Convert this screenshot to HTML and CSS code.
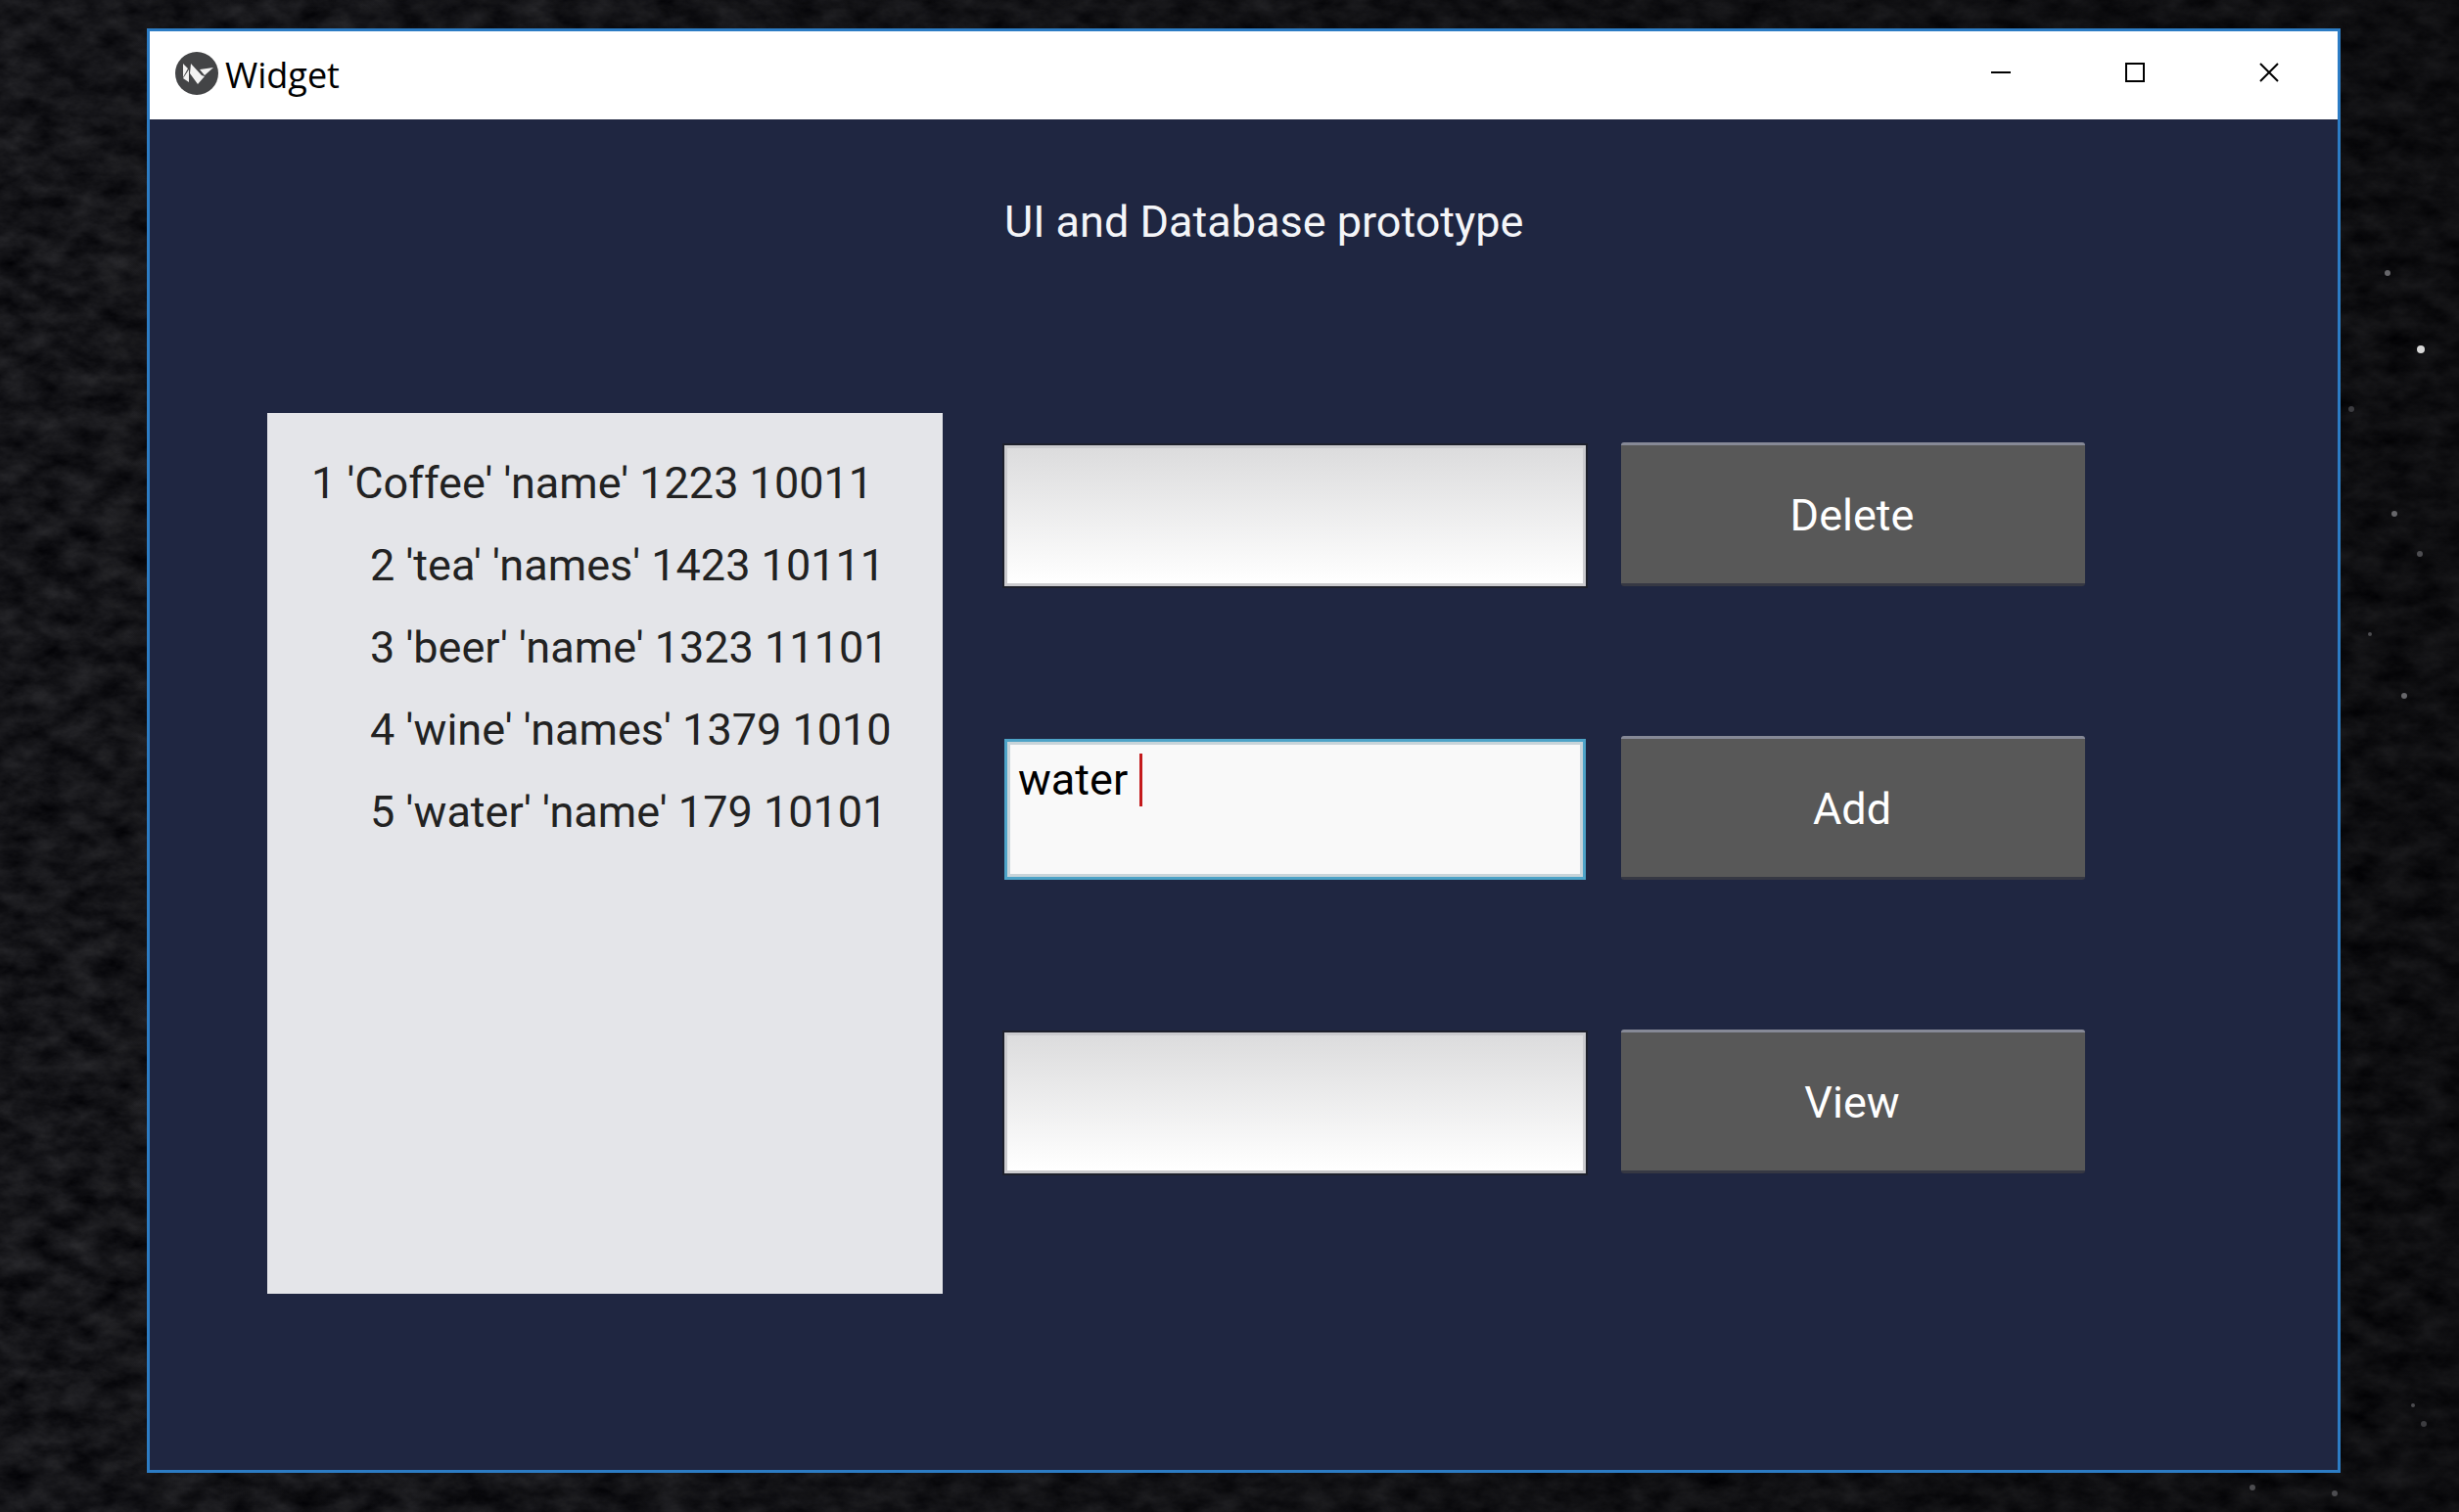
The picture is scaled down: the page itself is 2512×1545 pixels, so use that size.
FILE: index.html
```html
<!DOCTYPE html>
<html lang="en">
<head>
<meta charset="utf-8">
<title>Widget</title>
<link rel="stylesheet" href="styles.css">
</head>
<body>
<svg class="wallpaper" aria-hidden="true">
  <filter id="grain" x="0" y="0" width="100%" height="100%" color-interpolation-filters="sRGB">
    <feTurbulence type="fractalNoise" baseFrequency="0.03 0.05" numOctaves="5" seed="7"/>
    <feColorMatrix values="0.18 0 0 0 -0.008  0.18 0 0 0 -0.008  0.18 0 0 0 0.006  0 0 0 0 1"/>
  </filter>
  <rect width="100%" height="100%" filter="url(#grain)"/>
  <linearGradient id="shade">
    <stop offset="0" stop-color="#000" stop-opacity="0"/>
    <stop offset="1" stop-color="#000" stop-opacity=".35"/>
  </linearGradient>
  <rect width="100%" height="100%" fill="url(#shade)"/>
  <g fill="#66666a">
    <circle cx="2473" cy="357" r="4" fill="#d8d8d8"/>
    <circle cx="2439" cy="279" r="3"/>
    <circle cx="2446" cy="525" r="3"/>
    <circle cx="2472" cy="566" r="3" fill="#4c4c50"/>
    <circle cx="2456" cy="711" r="3"/>
    <circle cx="2421" cy="648" r="2" fill="#4c4c50"/>
    <circle cx="2402" cy="418" r="3" fill="#3c3c40"/>
    <circle cx="2301" cy="1520" r="3" fill="#4c4c50"/>
    <circle cx="2385" cy="1526" r="3" fill="#4c4c50"/>
    <circle cx="2465" cy="1436" r="2" fill="#4c4c50"/>
    <circle cx="2476" cy="1455" r="3" fill="#3c3c40"/>
  </g>
</svg>
<div class="window">
  <header class="titlebar">
    <svg class="logo" viewBox="0 0 44 44" aria-hidden="true">
      <circle cx="22" cy="22" r="22" fill="#434446"/>
      <path fill="#f2f2f2" d="M8 12l5 5-5 9zM14 18v13l-6-4zM16 12l11 12 3 1-7 8-8-11zM25 18l14-2-9 8z"/>
    </svg>
    <span class="caption">Widget</span>
    <button class="control" aria-label="Minimize"><svg viewBox="0 0 20 20"><path d="M0 10h20"/></svg></button>
    <button class="control" aria-label="Maximize"><svg viewBox="0 0 20 20"><path d="M1 1h18v18H1z"/></svg></button>
    <button class="control" aria-label="Close"><svg viewBox="0 0 20 20"><path d="M1 1l18 18M19 1L1 19"/></svg></button>
  </header>
  <main class="content">
    <h1 class="heading">UI and Database prototype</h1>
    <ul class="records">
      <li>1 'Coffee' 'name' 1223 10011</li>
      <li class="indented">2 'tea' 'names' 1423 10111</li>
      <li class="indented">3 'beer' 'name' 1323 11101</li>
      <li class="indented">4 'wine' 'names' 1379 1010</li>
      <li class="indented">5 'water' 'name' 179 10101</li>
    </ul>
    <form class="actions">
      <textarea class="field" aria-label="Record to delete"></textarea>
      <button class="action" type="button">Delete</button>
      <div class="entry">
        <textarea class="field active" aria-label="Record to add">water </textarea>
        <span class="caret"></span>
      </div>
      <button class="action" type="button">Add</button>
      <textarea class="field" aria-label="Record to view"></textarea>
      <button class="action" type="button">View</button>
    </form>
  </main>
</div>
</body>
</html>
```
FILE: styles.css
```css
* { box-sizing: border-box; }

body {
  margin: 0;
  min-height: 100vh;
  display: flex;
  padding: 29px 121px 40px 150px;
  background: #0f1014;
  font: 45px/84px Roboto, sans-serif;
}

.wallpaper {
  position: fixed;
  inset: 0;
  width: 100%;
  height: 100%;
  z-index: -1;
}

.window {
  flex: 1;
  display: flex;
  flex-direction: column;
  border: 3px solid #2c7cc4;
  background: #1f2641;
}

.titlebar {
  display: flex;
  align-items: center;
  height: 90px;
  padding: 0 2px 0 26px;
  background: #fff;
}

.logo { width: 44px; height: 44px; margin-bottom: 4px; }

.caption {
  flex: 1;
  padding-left: 7px;
  color: #000;
  font: 36px/48px "Open Sans", sans-serif;
}

.control {
  width: 137px;
  height: 90px;
  padding: 0 0 6px;
  border: 0;
  background: none;
  display: grid;
  place-items: center;
}

.control svg {
  width: 20px;
  height: 20px;
  fill: none;
  stroke: #000;
  stroke-width: 2;
}

.content {
  flex: 1;
  display: grid;
  grid-template-columns: 690fr 1104fr;
  align-content: start;
  gap: 153px 63px;
  padding: 63px 258px 180px 120px;
}

.heading {
  grid-column: 2;
  margin: 0;
  color: #f4f5f8;
  font-size: 45px;
  font-weight: 400;
  line-height: 84px;
}

.records {
  height: 900px;
  margin: 0;
  padding: 30px 45px;
  list-style: none;
  background: #e4e5e9;
  color: #222;
}

.indented { padding-left: 60px; }

.actions {
  display: grid;
  grid-template-columns: 594fr 474fr;
  grid-auto-rows: 144px;
  align-content: start;
  gap: 156px 36px;
  padding-top: 33px;
}

.field {
  display: block;
  width: 100%;
  height: 144px;
  padding: 12px 11px;
  border: 3px solid #cbcbce;
  outline: 2px solid #1d202b;
  border-radius: 0;
  background: linear-gradient(#dcdcdd, #fff) padding-box;
  color: #000;
  font: 45px/54px Roboto, sans-serif;
  resize: none;
  overflow: hidden;
}

.entry { position: relative; }

.field.active {
  outline: 0;
  border-color: #4da3c7;
  background: #f9f9f9;
  box-shadow: inset 0 0 0 3px #c8d4d9;
}

.caret {
  position: absolute;
  left: 138px;
  top: 15px;
  width: 3px;
  height: 54px;
  background: #c41a1c;
}

.action {
  height: 147px;
  margin-top: -3px;
  padding: 2px 2px 0 0;
  border: 0;
  border-top: 3px solid #868996;
  border-bottom: 3px solid #363843;
  border-radius: 3px;
  background: #585858;
  color: #fff;
  font: 45px/54px Roboto, sans-serif;
}
```
